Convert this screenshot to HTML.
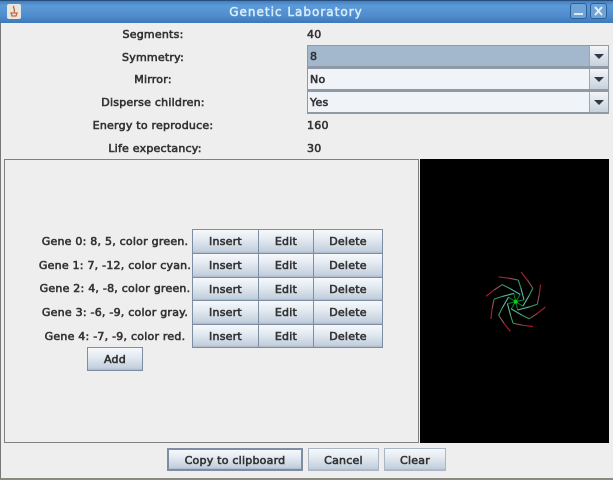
<!DOCTYPE html>
<html><head><meta charset="utf-8"><style>
html,body{margin:0;padding:0}
body{width:613px;height:480px;overflow:hidden;position:relative;background:#eeeeee;font:normal 11px "DejaVu Sans",sans-serif;color:#333;-webkit-text-stroke:.6px #333}
.a{position:absolute}
.t{position:absolute;white-space:nowrap;line-height:16px;letter-spacing:.23px}
.c{transform:translateX(-50%)}
.b{position:absolute;box-sizing:border-box;border:1px solid #7d8da3;background:linear-gradient(#f6f8fb 0,#e6ecf3 35%,#c3cfdd 92%,#a9b6c6 100%);text-align:center;color:#333;line-height:24px;letter-spacing:.23px;white-space:nowrap}
.combo{position:absolute;left:307px;width:302px;height:23px;box-sizing:border-box;border:1px solid #8f9aa6;border-bottom:2px solid #8f9aa6;background:#f0f3f7;line-height:22px;padding-left:2px;letter-spacing:.23px}
.ar{position:absolute;right:0;top:0;width:18px;height:100%;background:linear-gradient(#f3f5f8,#c7d1dc);border-left:1px solid #9aa6b2}
.ar:after{content:"";position:absolute;left:4px;top:8px;border-left:5px solid transparent;border-right:5px solid transparent;border-top:5px solid #2f3a48}
</style></head><body>
<div class="a" style="left:0;top:0;width:613px;height:23px;background:linear-gradient(#3f78b8 0,#5b9ad9 25%,#4f8ccd 70%,#3d78b8 100%)"></div>
<div class="a" style="left:0;top:0;width:613px;height:1px;background:#274f7d"></div>
<div class="a" style="left:7px;top:4px;width:14px;height:15px;background:#e8e6df;border-radius:2px"></div>
<svg class="a" style="left:7px;top:4px" width="14" height="15"><path d="M7 2c-2 2 2 3 0 6M4 9h6l-1 3H5z" stroke="#c3673a" stroke-width="1.3" fill="none"/></svg>
<div class="t c" style="left:296px;top:4px;color:#d8ecfa;font-size:12px;letter-spacing:1px;-webkit-text-stroke:.5px #d8ecfa">Genetic Laboratory</div>
<div class="a" style="left:570px;top:3px;width:17px;height:16px;box-sizing:border-box;border:1px solid #2d6099;border-radius:3px;background:#6ea3d8"></div>
<div class="a" style="left:574px;top:13px;width:9px;height:2px;background:#dbe9f5"></div>
<div class="a" style="left:590px;top:3px;width:17px;height:16px;box-sizing:border-box;border:1px solid #2d6099;border-radius:3px;background:#6ea3d8"></div>
<svg class="a" style="left:590px;top:3px" width="17" height="16"><path d="M5 4l7 8M12 4l-7 8" stroke="#e3eef8" stroke-width="2"/></svg>

<div class="t c" style="left:153px;top:27px">Segments:</div>
<div class="t c" style="left:153px;top:50px">Symmetry:</div>
<div class="t c" style="left:153px;top:72px">Mirror:</div>
<div class="t c" style="left:153px;top:95px">Disperse children:</div>
<div class="t c" style="left:153px;top:118px">Energy to reproduce:</div>
<div class="t c" style="left:155px;top:141px">Life expectancy:</div>
<div class="t" style="left:307px;top:27px">40</div>
<div class="t" style="left:307px;top:118px">160</div>
<div class="t" style="left:307px;top:141px">30</div>
<div class="combo" style="top:45px;background:#a3b8cc;color:#1f3a5c">8<div class="ar"></div></div>
<div class="combo" style="top:68px">No<div class="ar"></div></div>
<div class="combo" style="top:91px">Yes<div class="ar"></div></div>

<div class="a" style="left:4px;top:159px;width:415px;height:284px;box-sizing:border-box;border:1px solid #808080"></div>
<div class="a" style="left:0;top:23px;width:1px;height:457px;background:#777"></div>
<div class="a" style="left:420px;top:159px;width:189px;height:284px;background:#000"></div>

<div class="t c" style="left:115px;top:234px">Gene 0: 8, 5, color green.</div>
<div class="t c" style="left:115px;top:258px">Gene 1: 7, -12, color cyan.</div>
<div class="t c" style="left:115px;top:281px">Gene 2: 4, -8, color green.</div>
<div class="t c" style="left:115px;top:305px">Gene 3: -6, -9, color gray.</div>
<div class="t c" style="left:115px;top:329px">Gene 4: -7, -9, color red.</div>

<div class="b" style="left:192px;top:229px;width:67px;height:25px">Insert</div><div class="b" style="left:258px;top:229px;width:56px;height:25px">Edit</div><div class="b" style="left:313px;top:229px;width:70px;height:25px">Delete</div>
<div class="b" style="left:192px;top:253px;width:67px;height:25px">Insert</div><div class="b" style="left:258px;top:253px;width:56px;height:25px">Edit</div><div class="b" style="left:313px;top:253px;width:70px;height:25px">Delete</div>
<div class="b" style="left:192px;top:277px;width:67px;height:24px">Insert</div><div class="b" style="left:258px;top:277px;width:56px;height:24px">Edit</div><div class="b" style="left:313px;top:277px;width:70px;height:24px">Delete</div>
<div class="b" style="left:192px;top:300px;width:67px;height:25px">Insert</div><div class="b" style="left:258px;top:300px;width:56px;height:25px">Edit</div><div class="b" style="left:313px;top:300px;width:70px;height:25px">Delete</div>
<div class="b" style="left:192px;top:324px;width:67px;height:24px">Insert</div><div class="b" style="left:258px;top:324px;width:56px;height:24px">Edit</div><div class="b" style="left:313px;top:324px;width:70px;height:24px">Delete</div>
<div class="b" style="left:87px;top:347px;width:56px;height:24px">Add</div>

<svg class="a" style="left:470px;top:260px;filter:blur(.35px)" width="90" height="80" viewBox="0 0 90 80">
<defs><g id="arm" fill="none" stroke-width="1.1">
<path d="M0 0L7.2 4.5" stroke="#0a7a30"/><path d="M7.2 4.5L13.5 -6.3" stroke="#5ab8a0"/><path d="M13.5 -6.3L17.1 -13.5" stroke="#3c9a60"/><path d="M17.1 -13.5L11.7 -21.6" stroke="#8a5a5a"/><path d="M11.7 -21.6L5.4 -29.7" stroke="#b02030"/>
</g></defs>
<g transform="translate(45.7 41.7)">
<use href="#arm"/><use href="#arm" transform="rotate(45)"/><use href="#arm" transform="rotate(90)"/><use href="#arm" transform="rotate(135)"/><use href="#arm" transform="rotate(180)"/><use href="#arm" transform="rotate(225)"/><use href="#arm" transform="rotate(270)"/><use href="#arm" transform="rotate(315)"/>
<circle r="2" fill="#1c1"/>
</g></svg>

<div class="b" style="left:167px;top:448px;width:136px;height:23px;border:2px solid #7d8da3;line-height:21px">Copy to clipboard</div>
<div class="b" style="left:308px;top:448px;width:71px;height:23px;border-color:#aab6c4;line-height:23px">Cancel</div>
<div class="b" style="left:384px;top:448px;width:62px;height:23px;border-color:#aab6c4;line-height:23px">Clear</div>
<div class="a" style="left:0;top:478px;width:613px;height:2px;background:#8a8a80"></div>
</body></html>
